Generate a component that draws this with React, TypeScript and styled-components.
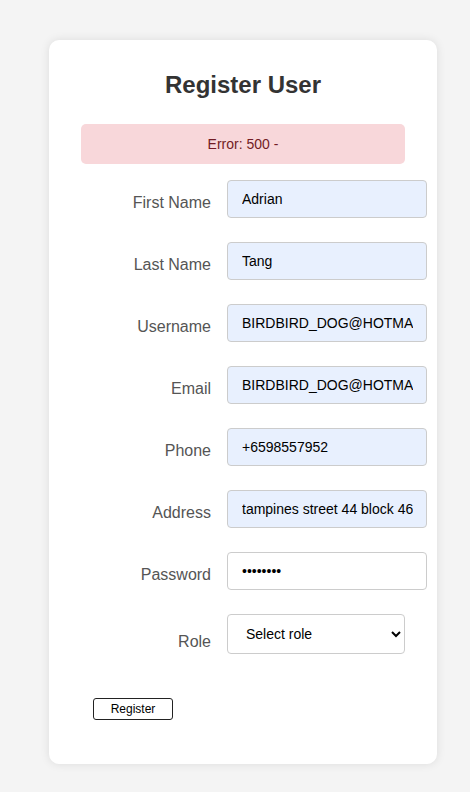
import React from "react";
import styled, { createGlobalStyle } from "styled-components";

const GlobalStyle = createGlobalStyle`
  html, body {
    margin: 0;
    padding: 0;
    background: #f4f4f4;
    font-family: "Liberation Sans", Arial, sans-serif;
  }
  * { box-sizing: border-box; }
`;

const Page = styled.div`
  padding: 40px 33px 28px 49px;
  min-height: 792px;
`;

const Card = styled.div`
  width: 388px;
  background: #ffffff;
  border-radius: 10px;
  box-shadow: 0 0 10px rgba(0, 0, 0, 0.1);
  padding: 31px 32px 32px;
`;

const Title = styled.h2`
  margin: 0 0 25px;
  font-size: 24px;
  line-height: 28px;
  font-weight: bold;
  color: #333333;
  text-align: center;
`;

const ErrorBox = styled.div`
  background: #f8d7da;
  color: #721c24;
  border-radius: 5px;
  padding: 12px;
  font-size: 14px;
  line-height: 16px;
  text-align: center;
  margin-bottom: 16px;
`;

const Row = styled.div`
  display: flex;
  align-items: flex-start;
  margin-bottom: 24px;
`;

const Label = styled.label<{ $offset: number }>`
  flex: 0 0 130px;
  margin-right: 16px;
  padding-top: ${(p) => p.$offset}px;
  text-align: right;
  font-size: 16px;
  line-height: 18px;
  color: #555555;
`;

const Field = styled.div`
  flex: 1;
  min-width: 0;
`;

const Input = styled.input<{ $filled?: boolean }>`
  display: block;
  width: 200px;
  height: 38px;
  padding: 0 13px 0 14px;
  border: 1px solid #cccccc;
  border-radius: 4px;
  background: ${(p) => (p.$filled ? "#e8f0fe" : "#ffffff")};
  font-family: "Liberation Sans", Arial, sans-serif;
  font-size: 14px;
  color: #000000;
  outline: none;
`;

const Select = styled.select`
  display: block;
  width: 100%;
  height: 40px;
  padding: 0 10px 0 14px;
  border: 1px solid #cccccc;
  border-radius: 4px;
  background: #ffffff;
  font-family: "Liberation Sans", Arial, sans-serif;
  font-size: 14px;
  color: #000000;
`;

const Button = styled.button`
  display: block;
  width: 80px;
  height: 22px;
  margin: 44px 0 12px 12px;
  padding: 0;
  background: #ffffff;
  border: 1px solid #222222;
  border-radius: 3px;
  font-family: "Liberation Sans", Arial, sans-serif;
  font-size: 12px;
  color: #000000;
  cursor: pointer;
`;

const fields: { label: string; value: string; type?: string; filled: boolean }[] = [
  { label: "First Name", value: "Adrian", filled: true },
  { label: "Last Name", value: "Tang", filled: true },
  { label: "Username", value: "BIRDBIRD_DOG@HOTMAIL.COM", filled: true },
  { label: "Email", value: "BIRDBIRD_DOG@HOTMAIL.COM", filled: true },
  { label: "Phone", value: "+6598557952", filled: true },
  { label: "Address", value: "tampines street 44 block 461", filled: true },
  { label: "Password", value: "12345678", type: "password", filled: false },
];

export default function App() {
  return (
    <>
      <GlobalStyle />
      <Page>
        <Card>
          <Title>Register User</Title>
          <ErrorBox>Error: 500 - </ErrorBox>
          <form onSubmit={(e) => e.preventDefault()}>
            {fields.map((f) => (
              <Row key={f.label}>
                <Label $offset={14}>{f.label}</Label>
                <Field>
                  <Input
                    type={f.type ?? "text"}
                    defaultValue={f.value}
                    $filled={f.filled}
                  />
                </Field>
              </Row>
            ))}
            <Row>
              <Label $offset={19}>Role</Label>
              <Field>
                <Select defaultValue="">
                  <option value="">Select role</option>
                  <option value="admin">Admin</option>
                  <option value="user">User</option>
                </Select>
              </Field>
            </Row>
            <Button type="submit">Register</Button>
          </form>
        </Card>
      </Page>
    </>
  );
}
